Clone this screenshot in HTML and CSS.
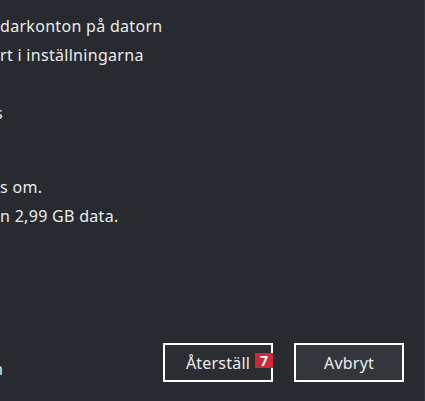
FILE: index.html
```html
<!DOCTYPE html>
<html lang="sv">
<head>
<meta charset="utf-8">
<link rel="stylesheet" href="styles.css">
</head>
<body>
<div class="dialog">
  <div class="body">
    <p class="line first">darkonton på datorn</p>
    <p class="line">rt i inställningarna</p>
    <p class="line clip-s gap1">s</p>
    <p class="line gap2">s om.</p>
    <p class="line">n 2,99 GB data.</p>
  </div>
  <div class="footer">
    <span class="link">n</span>
    <div class="buttons">
      <button class="btn primary">Återställ<span class="badge">7</span></button>
      <button class="btn secondary">Avbryt</button>
    </div>
  </div>
</div>
</body>
</html>
```

FILE: styles.css
```css
html, body {
  margin: 0;
  padding: 0;
  background: #272b2f;
}
body {
  width: 425px;
  height: 401px;
  overflow: hidden;
  font-family: "Noto Sans", "Open Sans", sans-serif;
  font-size: 16px;
  color: #ebebeb;
}
.dialog {
  box-sizing: border-box;
  width: 425px;
  height: 401px;
  border-right: 1px solid #33383d;
  display: flex;
  flex-direction: column;
  justify-content: space-between;
  padding-top: 12px;
  overflow: hidden;
}
.line {
  margin: 0;
  line-height: 29px;
  white-space: nowrap;
  letter-spacing: 0.3px;
}
.first { margin-left: 0; }
.clip-s {
  margin-left: -5px;
}
.gap1 { margin-top: 29px; }
.gap2 { margin-top: 45px; }
.footer {
  display: flex;
  align-items: center;
  justify-content: space-between;
  padding-bottom: 19px;
}
.link {
  margin-left: -7px;
  line-height: 20px;
  padding-top: 12px;
}
.buttons {
  display: flex;
  gap: 21px;
  padding-right: 20px;
}
.btn {
  position: relative;
  box-sizing: border-box;
  width: 110px;
  height: 39px;
  border: 2px solid #ffffff;
  background: #2a2e32;
  color: #ebebeb;
  font-family: "Noto Sans", "Open Sans", sans-serif;
  font-size: 16px;
  letter-spacing: 0.2px;
  padding: 0;
  padding-top: 1px;
}
.secondary {
  background: #33373b;
}
.badge {
  position: absolute;
  right: -2px;
  top: 8px;
  width: 18px;
  height: 15px;
  background: #cc2936;
  color: #ffffff;
  font-weight: bold;
  font-size: 14px;
  letter-spacing: 0;
  line-height: 15px;
  text-align: center;
}
```
